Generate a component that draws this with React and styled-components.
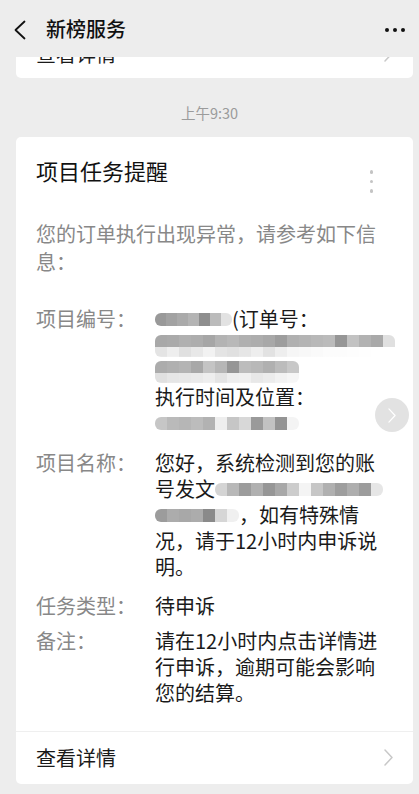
import React from "react";
import styled, { createGlobalStyle } from "styled-components";

const GlobalStyle = createGlobalStyle`
  html, body {
    margin: 0;
    padding: 0;
    background: #ededed;
  }
  body {
    font-family: "Noto Sans CJK SC", "Noto Sans", Roboto, sans-serif;
    -webkit-font-smoothing: antialiased;
  }
`;

const Page = styled.div`
  width: 419px;
  min-height: 794px;
  background: #ededed;
  overflow: hidden;
`;

const Header = styled.div`
  height: 57px;
  display: flex;
  align-items: center;
  padding: 0 12px 0 13px;
  box-sizing: border-box;
`;

const BackBtn = styled.div`
  width: 18px;
  height: 24px;
  display: flex;
  align-items: center;
  margin-right: 15px;
  margin-top: 2px;
`;

const Title = styled.div`
  flex: 1;
  font-size: 20px;
  font-weight: 500;
  color: #111;
  line-height: 28px;
`;

const MoreBtn = styled.div`
  display: flex;
  gap: 4px;
  margin-top: 2px;
  margin-right: 2px;
`;

const Dot = styled.span`
  width: ${(p) => p.size}px;
  height: ${(p) => p.size}px;
  border-radius: 50%;
  background: ${(p) => p.color};
`;

const Card = styled.div`
  position: relative;
  margin: 0 6px 0 16px;
  background: #fff;
  border-radius: 5px;
`;

const PrevCard = styled(Card)`
  height: 21px;
  overflow: hidden;
  border-radius: 0 0 5px 5px;
`;

const Footer = styled.div`
  display: flex;
  align-items: center;
  justify-content: space-between;
  height: ${(p) => p.h || 52}px;
  padding: 0 20px;
  margin-top: ${(p) => p.shift || 0}px;
  font-size: 20px;
  color: #1a1a1a;
  border-top: ${(p) => (p.divided ? "1px solid #efefef" : "none")};
`;

const Time = styled.div`
  margin-top: 25px;
  margin-bottom: 14px;
  text-align: center;
  font-size: 14.5px;
  line-height: 20px;
  color: #9b9b9b;
`;

const Body = styled.div`
  padding: 18px 20px 25px 20px;
`;

const CardTitleRow = styled.div`
  display: flex;
  justify-content: space-between;
  align-items: flex-start;
`;

const CardTitle = styled.div`
  font-size: 22px;
  line-height: 30px;
  color: #111;
`;

const VDots = styled.div`
  display: flex;
  flex-direction: column;
  gap: 6px;
  margin: 15px 20px 0 0;
`;

const Intro = styled.div`
  margin-top: 27px;
  font-size: 20px;
  line-height: 28px;
  color: #888;
`;

const Rows = styled.div`
  margin-top: 30px;
  display: flex;
  flex-direction: column;
`;

const Row = styled.div`
  display: flex;
  margin-top: ${(p) => p.gap || 0}px;
  font-size: 20px;
  line-height: 26px;
`;

const Label = styled.div`
  width: 119px;
  flex-shrink: 0;
  color: #888;
`;

const Value = styled.div`
  flex: 1;
  color: #1a1a1a;
  white-space: nowrap;
`;

const stops = (cells) => {
  const w = 100 / cells.length;
  return cells
    .map((c, i) => `${c} ${(i * w).toFixed(2)}%, ${c} ${((i + 1) * w).toFixed(2)}%`)
    .join(", ");
};

const Blur = styled.span`
  display: inline-block;
  vertical-align: middle;
  width: ${(p) => p.cells.length * (p.cw || 12)}px;
  height: ${(p) => (p.under ? 22 : 13)}px;
  margin-top: -3px;
  border-radius: 6px;
  filter: blur(0.7px);
  background: ${(p) =>
    p.under
      ? `linear-gradient(to right, ${stops(p.cells)}) top / 100% 55% no-repeat,
         linear-gradient(to right, ${stops(p.under)}) bottom / 100% 45% no-repeat`
      : `linear-gradient(to right, ${stops(p.cells)})`};
`;

const Float = styled.div`
  position: absolute;
  top: 261px;
  right: 4px;
  width: 34px;
  height: 34px;
  border-radius: 50%;
  background: rgba(190, 190, 190, 0.45);
  display: flex;
  align-items: center;
  justify-content: center;
`;

const Chevron = ({ color = "#c8c8c8", w = 9, h = 17, sw = 1.5 }) => (
  <svg width={w} height={h} viewBox="0 0 9 17" fill="none">
    <path d="M1 1 L8 8.5 L1 16" stroke={color} strokeWidth={sw} strokeLinecap="round" strokeLinejoin="round" />
  </svg>
);

const g = (n) => `#${n}${n}${n}`;

const App = () => {
  return (
    <Page>
      <GlobalStyle />
      <Header>
        <BackBtn>
          <svg width="13" height="20" viewBox="0 0 13 20" fill="none">
            <path d="M11.5 1.5 L2.5 10 L11.5 18.5" stroke="#111" strokeWidth="1.8" strokeLinecap="round" strokeLinejoin="round" />
          </svg>
        </BackBtn>
        <Title>新榜服务</Title>
        <MoreBtn>
          <Dot size={4} color="#111" />
          <Dot size={4} color="#111" />
          <Dot size={4} color="#111" />
        </MoreBtn>
      </Header>

      <PrevCard>
        <Footer h={26} shift={-17}>
          <span>查看详情</span>
          <Chevron />
        </Footer>
      </PrevCard>

      <Time>上午9:30</Time>

      <Card>
        <Body>
          <CardTitleRow>
            <CardTitle>项目任务提醒</CardTitle>
            <VDots>
              <Dot size={3.5} color="#c4c4c4" />
              <Dot size={3.5} color="#c4c4c4" />
              <Dot size={3.5} color="#c4c4c4" />
            </VDots>
          </CardTitleRow>
          <Intro>
            您的订单执行出现异常，请参考如下信
            <br />
            息：
          </Intro>
          <Rows>
            <Row>
              <Label>项目编号：</Label>
              <Value>
                <Blur cw={11} cells={[g("99"), g("a2"), g("aa"), g("b4"), g("8e"), g("bb"), g("e2")]} />(订单号：
                <br />
                <Blur
                  cells={[g("a8"), g("aa"), g("b0"), g("ad"), g("a6"), g("b3"), g("b8"), g("b0"), g("ad"), g("a8"), g("9d"), g("b0"), g("b4"), g("b8"), g("bb"), g("96"), g("c2"), g("b2"), g("a9"), g("e0")]}
                  under={[g("e4"), g("ee"), g("e0"), g("e8"), g("f2"), g("e4"), g("e0"), g("e6"), g("ee"), g("e2"), g("ee"), g("f6"), g("f8"), g("fa"), g("fc"), g("fc"), g("fd"), g("fe"), g("ff"), g("ff")]}
                />
                <br />
                <Blur
                  cells={[g("ac"), g("b0"), g("b4"), g("a8"), g("c4"), g("b6"), g("96"), g("bc"), g("b8"), g("b0"), g("bc"), g("c8")]}
                  under={[g("e0"), g("e6"), g("e8"), g("ea"), g("ee"), g("e4"), g("ee"), g("f0"), g("e8"), g("ec"), g("f2"), g("f6")]}
                />
                <br />
                执行时间及位置：
                <br />
                <Blur cells={[g("c6"), g("ba"), g("b6"), g("bc"), g("b2"), g("ee"), g("c6"), g("d8"), g("9a"), g("c2"), g("94"), g("f4")]} />
              </Value>
            </Row>
            <Row gap={14}>
              <Label>项目名称：</Label>
              <Value>
                您好，系统检测到您的账
                <br />
                号发文
                <Blur cells={[g("d4"), g("b8"), g("9c"), g("b0"), g("96"), g("a8"), g("cc"), g("f4"), g("c6"), g("b0"), g("9e"), g("ae"), g("9c"), g("e6")]} />
                <br />
                <Blur cells={[g("9c"), g("ac"), g("a8"), g("ac"), g("8a"), g("d6"), g("f0")]} />，如有特殊情
                <br />
                况，请于12小时内申诉说
                <br />
                明。
              </Value>
            </Row>
            <Row gap={13}>
              <Label>任务类型：</Label>
              <Value>待申诉</Value>
            </Row>
            <Row gap={9}>
              <Label>备注：</Label>
              <Value>
                请在12小时内点击详情进
                <br />
                行申诉，逾期可能会影响
                <br />
                您的结算。
              </Value>
            </Row>
          </Rows>
        </Body>
        <Footer divided h={52}>
          <span>查看详情</span>
          <Chevron />
        </Footer>
        <Float>
          <Chevron color="#ffffff" w={8} h={15} sw={1.4} />
        </Float>
      </Card>
    </Page>
  );
};

export default App;
